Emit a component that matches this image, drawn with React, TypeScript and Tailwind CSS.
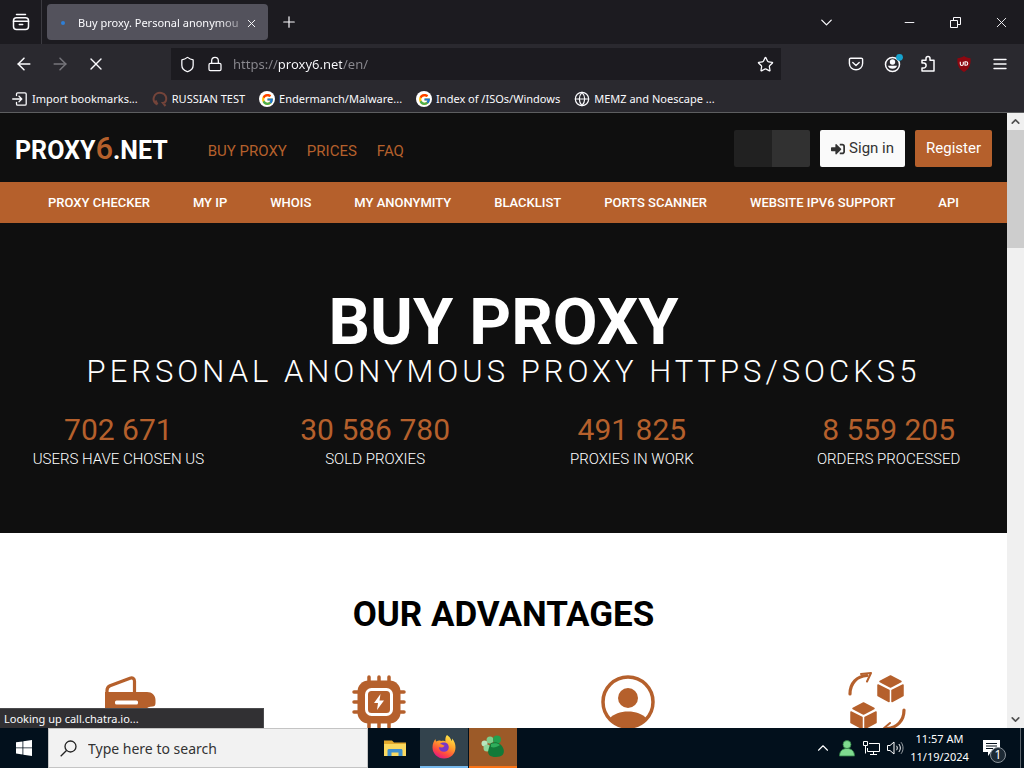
import React from 'react'
import { FcGoogle } from 'react-icons/fc';
import { FaSignInAlt } from 'react-icons/fa';
import { ArrowLeft, ArrowRight, ChevronDown, ChevronUp, Globe, Lock, Minus, Plus, Shield, Star, X } from 'lucide-react';

interface Stat {
    value: string;
    label: string;
}

const tools = ['Proxy checker', 'My IP', 'Whois', 'My anonymity', 'Blacklist', 'Ports scanner', 'Website IPv6 support', 'API'];

const stats: Stat[] = [
    { value: '702 671', label: 'Users have chosen us' },
    { value: '30 586 780', label: 'Sold proxies' },
    { value: '491 825', label: 'Proxies in work' },
    { value: '8 559 205', label: 'Orders processed' },
];

const iconButton = 'flex h-8 w-8 shrink-0 items-center justify-center';

/* ---------- browser icons ---------- */

const FirefoxViewIcon = () => (
    <svg width="18" height="18" viewBox="0 0 18 18" fill="none" stroke="currentColor" strokeWidth="1.5" strokeLinecap="round">
        <path d="M4.500 1.500h9" />
        <rect x="1.500" y="4.800" width="15" height="11.700" rx="3" />
        <path d="M1.500 8.200h15M7.300 11.500h3.400" />
    </svg>
);

const PocketIcon = () => (
    <svg width="16" height="16" viewBox="0 0 16 16" fill="none" stroke="currentColor" strokeWidth="1.4" strokeLinecap="round" strokeLinejoin="round">
        <path d="M2.8 2.2h10.4a1.4 1.4 0 0 1 1.4 1.4v4a6.6 6.1 0 0 1-13.2 0v-4a1.4 1.4 0 0 1 1.4-1.4z" />
        <path d="M4.8 6.5 8 9.400l3.200-2.900" />
    </svg>
);

const AccountIcon = () => (
    <svg width="22" height="22" viewBox="0 0 22 22" fill="none">
        <circle cx="11.500" cy="11.500" r="7" stroke="currentColor" strokeWidth="1.5" />
        <circle cx="11.500" cy="9" r="2.700" fill="currentColor" />
        <path d="M6.900 12.800h9.200a4.800 4.200 0 0 1-9.200 0z" fill="currentColor" />
        <circle cx="18.500" cy="4.300" r="3.400" fill="#16a3cf" />
    </svg>
);

const ExtensionsIcon = () => (
    <svg width="16" height="18" viewBox="0 0 16 18" fill="none" stroke="currentColor" strokeWidth="1.5" strokeLinejoin="round">
        <path d="M2 8V5.2h4V3.4a2 2 0 0 1 4 0v1.8h4V16H2v-3h1.6a2.4 2.4 0 0 0 0-5z" />
    </svg>
);

const AdblockIcon = () => (
    <svg width="16" height="16" viewBox="0 0 16 16" fill="none">
        <path d="M8 0c2 1.400 4.200 2 6.500 2.200C15.300 9 12.500 13.500 8 16 3.500 13.500.7 9 1.500 2.200 3.800 2 6 1.400 8 0z" fill="#8d0710" />
        <path d="M4.300 5.700v2.300a1.500 1.500 0 0 0 3 0V5.700M9 5.800h1a1.700 1.700 0 0 1 0 3.500H9z" stroke="#fff" strokeWidth="1.1" />
    </svg>
);

const MenuIcon = () => (
    <svg width="14" height="12" viewBox="0 0 14 12" stroke="currentColor" strokeWidth="1.400" strokeLinecap="round">
        <path d="M1 1.500h12M1 6h12M1 10.500h12" />
    </svg>
);

const RestoreIcon = () => (
    <svg width="11" height="11" viewBox="0 0 11 11" fill="none" stroke="currentColor">
        <path d="M.5 3.500h7v7h-7zM3.500 3.500v-3h7v7h-3" />
    </svg>
);

const ImportIcon = () => (
    <svg width="16" height="16" viewBox="0 0 16 16" fill="none" stroke="currentColor" strokeWidth="1.300" strokeLinecap="round" strokeLinejoin="round">
        <path d="M4.500 4.500V3a1.200 1.200 0 0 1 1.200-1.200h7.300A1.200 1.200 0 0 1 14.200 3v10a1.200 1.200 0 0 1-1.200 1.200H5.700A1.200 1.200 0 0 1 4.500 13v-1.500M.7 8h8.800M7 5.200 9.800 8 7 10.800" />
    </svg>
);

const HeadIcon = () => (
    <svg width="16" height="16" viewBox="0 0 16 16" fill="none" stroke="#74443a" strokeWidth="2">
        <path d="M5.500 13.500C2.500 12 1 9.500 1.800 6.500 2.800 3 6 1.300 9.500 2c4 .8 5.500 4.500 4.300 8-.6 1.300-1.800 2-2.800 2l2.500 3M5.500 13.500l-2-4" />
    </svg>
);

const GoogleBadge = () => (
    <span className="flex h-4 w-4 items-center justify-center rounded-full bg-white">
        <FcGoogle size={13} />
    </span>
);

/* ---------- advantage icons ---------- */

const WalletIcon = () => (
    <svg width="56" height="56" viewBox="1 0 56 56" fill="none">
        <path d="M6 40V16.500c0-2.500 1-3.800 3-4.700L29 4.200c2.500-1 4.500.3 4.500 3V20" stroke="#b5602c" strokeWidth="3.200" />
        <path d="M4 18h42c5 0 8.500 3.500 8.500 8v3c0 2.500-1 3.500-3 3.500-3.500 0-5.500 1-6.500 3V50H10c-4 0-6-2-6-6z" fill="#b5602c" />
        <rect x="14" y="26.500" width="23" height="4" rx="1.500" fill="#fff" />
    </svg>
);

const ChipIcon = () => (
    <svg width="56" height="56" viewBox="0 0 56 56" fill="none">
        <path d="M18 3v50M28 3v50M38 3v50M3 18h50M3 28h50M3 38h50" stroke="#b5602c" strokeWidth="3.500" strokeLinecap="round" />
        <rect x="6.500" y="6.500" width="43" height="43" rx="11" fill="#b5602c" />
        <rect x="15.500" y="15.500" width="25" height="25" rx="5" stroke="#fff" strokeWidth="3" />
        <path d="M29.500 20 23 29h4l-1 7 7-9.500h-4.500z" fill="#fff" />
    </svg>
);

const PersonIcon = () => (
    <svg width="56" height="56" viewBox="0 0 56 56" fill="none">
        <circle cx="28" cy="28" r="25" stroke="#b5602c" strokeWidth="3.500" />
        <circle cx="28" cy="24" r="10" fill="#b5602c" />
        <path d="M10 44c4-4 10-6.500 18-6.500S42 40 46 44c-4 6-10 9.500-18 9.500S14 50 10 44z" fill="#b5602c" />
    </svg>
);

const Cube = () => (
    <g fill="#b5602c" stroke="#b5602c" strokeWidth="1.500" strokeLinejoin="round">
        <path d="M13.500 1 24 6.500 13.500 12 3 6.500z" />
        <path d="M1 10l11 5.500v11L1 20.500z" />
        <path d="M26 10l-11 5.500v11l11-6z" />
    </g>
);

const CubesIcon = () => (
    <svg width="60" height="60" viewBox="0 0 60 60" fill="none">
        <g transform="translate(30 3)"><Cube /></g>
        <g transform="translate(3 30)"><Cube /></g>
        <path d="M3 22C3 11 10 4 20 3.500" stroke="#b5602c" strokeWidth="3.200" strokeLinecap="round" />
        <path d="M14 2l10-1-4 8.500" stroke="#b5602c" strokeWidth="2" strokeLinejoin="round" strokeLinecap="round" />
        <path d="M57 38c0 11-7 17.500-17 18.500" stroke="#b5602c" strokeWidth="3.200" strokeLinecap="round" />
        <path d="M43 51l-7 6 10 2" stroke="#b5602c" strokeWidth="2" strokeLinejoin="round" strokeLinecap="round" />
    </svg>
);

const advantageIcons = [WalletIcon, ChipIcon, PersonIcon, CubesIcon];

/* ---------- taskbar icons ---------- */

const WindowsIcon = () => (
    <svg width="16" height="16" viewBox="0 0 16 16" fill="#fff">
        <path d="M0 2.300 6.500 1.400v6.100H0zM7.300 1.300 16 0v7.500H7.300zM0 8.300h6.500v6.200L0 13.600zM7.300 8.300H16V16l-8.700-1.300z" />
    </svg>
);

const ExplorerIcon = () => (
    <svg width="22" height="20" viewBox="0 0 22 20">
        <path d="M0 2.500h8l2 2h12V18H0z" fill="#e3a92d" />
        <path d="M0 6h22v12H0z" fill="#fbd95f" />
        <path d="M3.500 18v-5.500c0-1 .8-1.500 1.500-1.500h12c.8 0 1.500.5 1.500 1.500V18h-4v-3.500h-7V18z" fill="#3f8fcf" />
    </svg>
);

const FirefoxIcon = () => (
    <svg width="24" height="24" viewBox="0 0 24 24">
        <defs>
            <linearGradient id="fox" x1="0.8" y1="0" x2="0.3" y2="1">
                <stop offset="0" stopColor="#fff04a" />
                <stop offset="0.45" stopColor="#ff9a2b" />
                <stop offset="0.75" stopColor="#ff4a3f" />
                <stop offset="1" stopColor="#e31587" />
            </linearGradient>
        </defs>
        <path d="M15 0c3.500 2.500 4 4.500 4.500 6 .5-.8.500-1.500.500-2.500C22.500 6 23.500 9 23.500 12.500 23.500 19 18.500 23.500 12 23.500S.5 18.500.5 12.500c0-4 1.500-6.500 3-8.500 0 1 .2 1.500.8 2.500C6 5.500 7.500 5.300 9 6c2-.5 3.500-.5 4.500.5C13 4 13.500 1.500 15 0z" fill="url(#fox)" />
        <path d="M8 9c2-2 6.500-2 8 .5 1.800 3 .3 7-3.500 7.300-3.500.2-5.500-2-5.700-4.500L10 12.500c1.500-.3 2-1 2.500-1.800C11 10.500 10 9 8 9z" fill="#7a35c9" />
    </svg>
);

const BlobIcon = () => (
    <svg width="26" height="24" viewBox="0 0 26 24">
        <circle cx="10" cy="5" r="3.500" fill="#7fce8c" />
        <circle cx="17" cy="4.500" r="4" fill="#23a04e" />
        <circle cx="4.500" cy="8.500" r="3" fill="#b9e6bd" />
        <circle cx="7" cy="13" r="3.500" fill="#8fd69a" />
        <path d="M11 8c5-2 10.500 0 12.500 6 1.500 5-1.500 8-7.500 8S7 19.500 8.500 14.500c.5-2 1-4 2.500-6.500z" fill="#127a38" />
        <path d="M11 9c3-1.500 7-1 9 1-3 2-6 3-9 2z" fill="#2fae5b" />
    </svg>
);

const MessengerIcon = () => (
    <svg width="18" height="18" viewBox="0 0 18 18" fill="#7fdb8f" stroke="#2f7d44" strokeWidth="0.8">
        <path d="M1.500 17c0-5 3-7.500 7.500-7.500s7.500 2.500 7.500 7.500z" />
        <circle cx="9" cy="5.500" r="4" />
    </svg>
);

const NetworkIcon = () => (
    <svg width="17" height="15" viewBox="0 0 17 15" fill="none" stroke="#fff">
        <path d="M6 2.500h10.500v8H4.500V7M10.500 10.500v3M7 13.500h7M.5.500h4v4h-4zM2.500 4.500v8" />
    </svg>
);

const SpeakerIcon = () => (
    <svg width="17" height="14" viewBox="0 0 17 14" fill="none" stroke="#fff">
        <path d="M.5 4.500h2.500l4-3.500v12l-4-3.500H.5zM9.500 4.800c1 1.300 1 3.100 0 4.400M11.800 3c2 2.300 2 5.700 0 8" />
        <path d="M14 1.200c2.700 3.400 2.700 8.200 0 11.600" opacity="0.600" />
    </svg>
);

const ActionCenterIcon = () => (
    <svg width="18" height="18" viewBox="0 0 18 18">
        <path d="M0 1h17v12H8l-3 4v-4H0z" fill="#fff" />
        <path d="M3 4.500h11M3 7h11M3 9.500h7" stroke="#06121d" />
    </svg>
);

const TabStrip = () => (
    <div className="flex h-11 bg-[#1c1b20]">
        <button aria-label="Firefox View" className="flex w-[42px] shrink-0 items-center justify-center border-r border-[#3c3b41]">
            <FirefoxViewIcon />
        </button>
        <div className="my-1 ml-[5px] flex w-[221px] items-center rounded bg-[#53525c] pt-0.5 pr-[9px] pl-[14px]">
            <span className="mr-[13px] h-1 w-1 shrink-0 rounded-full bg-[#2f7fd6]" />
            <span className="flex-1 text-[11px] leading-5 whitespace-nowrap [mask-image:linear-gradient(to_right,#000_85%,#0004)]">
                Buy proxy. Personal anonymou
            </span>
            <button aria-label="Close tab" className="flex w-4 shrink-0 justify-center">
                <X size={13} strokeWidth={1.8} />
            </button>
        </div>
        <button aria-label="New tab" className="ml-[5px] flex w-8 items-center justify-center">
            <Plus size={18} strokeWidth={1.6} />
        </button>
        <div className="flex-1" />
        <button aria-label="List all tabs" className="mr-11 flex w-8 items-center justify-center">
            <ChevronDown size={19} strokeWidth={1.6} />
        </button>
        <button aria-label="Minimize" className="flex w-[46px] items-center justify-center">
            <Minus size={15} strokeWidth={1.5} />
        </button>
        <button aria-label="Restore" className="flex w-[46px] items-center justify-center">
            <RestoreIcon />
        </button>
        <button aria-label="Close" className="flex w-[46px] items-center justify-center">
            <X size={17} strokeWidth={1.3} />
        </button>
    </div>
);

const Toolbar = () => (
    <div className="flex h-10 items-center bg-[#2a292f] px-2">
        <div className="flex gap-1">
            <button aria-label="Back" className={iconButton}><ArrowLeft size={20} strokeWidth={1.8} /></button>
            <button aria-label="Forward" className={`${iconButton} text-[#77767c]`}><ArrowRight size={20} strokeWidth={1.8} /></button>
            <button aria-label="Stop" className={iconButton}><X size={20} strokeWidth={1.6} /></button>
        </div>
        <div className="mx-[59px] flex h-8 flex-1 items-center bg-[#1c1b20] pl-2">
            <Shield size={17} strokeWidth={1.8} className="shrink-0" />
            <Lock size={16} strokeWidth={1.9} className="ml-[11px] shrink-0" />
            <input
                aria-label="Address"
                defaultValue="https://proxy6.net/en/"
                className="ml-[10px] min-w-0 flex-1 bg-[linear-gradient(to_right,#8a898f_45px,#fbfbfe_45px,#fbfbfe_109px,#8a898f_109px)] bg-clip-text pt-0.5 text-[13px] text-transparent outline-none"
            />
            <button aria-label="Bookmark this page" className={iconButton}><Star size={17} strokeWidth={1.8} /></button>
        </div>
        <div className="flex gap-1">
            <button aria-label="Save to Pocket" className={iconButton}><PocketIcon /></button>
            <button aria-label="Account" className={iconButton}><AccountIcon /></button>
            <button aria-label="Extensions" className={iconButton}><ExtensionsIcon /></button>
            <button aria-label="Ad blocker" className={iconButton}><AdblockIcon /></button>
            <button aria-label="Open menu" className={iconButton}><MenuIcon /></button>
        </div>
    </div>
);

const bookmarks = [
    { title: 'Import bookmarks...', icon: <ImportIcon /> },
    { title: 'RUSSIAN TEST', icon: <HeadIcon /> },
    { title: 'Endermanch/Malware...', icon: <GoogleBadge /> },
    { title: 'Index of /ISOs/Windows', icon: <GoogleBadge /> },
    { title: 'MEMZ and Noescape ...', icon: <Globe size={16} strokeWidth={1.8} /> },
];

const Bookmarks = () => (
    <div className="flex h-7 items-center gap-[14px] bg-[#2a292f] pt-0.5 pl-3 text-[11px]">
        {bookmarks.map((bookmark) => (
            <a key={bookmark.title} href="#" className="flex items-center gap-1 whitespace-nowrap">
                {bookmark.icon}
                {bookmark.title}
            </a>
        ))}
    </div>
);

const SiteHeader = () => (
    <header className="flex h-[69px] items-center px-[15px] pt-0.5">
        <a href="#" className="mt-1 flex items-baseline text-[25px] font-bold">
            PROXY<span className="text-[31px] leading-[30px] font-medium text-[#b5602c]">6</span>.NET
        </a>
        <nav className="mt-1.5 ml-10 flex gap-5 text-[15px] text-[#b5602c]">
            <a href="#">BUY PROXY</a>
            <a href="#">PRICES</a>
            <a href="#">FAQ</a>
        </nav>
        <div className="ml-auto flex gap-[10px] text-[15px]">
            <button aria-label="Language" className="flex h-[37px] w-[76px] overflow-hidden rounded-xs">
                <span className="h-full flex-1 bg-[#212121]" />
                <span className="h-full flex-1 bg-[#313131]" />
            </button>
            <button className="flex h-[37px] items-center gap-1 rounded-xs bg-[#fafafa] px-[11px] text-[#333]">
                <FaSignInAlt size={14} />
                Sign in
            </button>
            <button className="h-[37px] rounded-xs bg-[#b5602c] px-[11px] text-white">Register</button>
        </div>
    </header>
);

const Site = () => (
    <main className="min-w-0 flex-1 overflow-hidden bg-[#0f0f0f] font-['Roboto',sans-serif] text-white">
        <SiteHeader />
        <nav className="flex h-[41px] items-center justify-between bg-[#b5602c] px-12 text-[13px] font-medium uppercase">
            {tools.map((tool) => <a key={tool} href="#">{tool}</a>)}
        </nav>
        <section className="h-[310px] overflow-hidden pt-[67px] text-center">
            <h1 className="text-[65px] leading-[64px] font-bold">BUY PROXY</h1>
            <h2 className="text-[31px] leading-9 font-light tracking-[4px] whitespace-nowrap">PERSONAL ANONYMOUS PROXY HTTPS/SOCKS5</h2>
            <div className="-mx-[10px] mt-[22px] grid grid-cols-4">
                {stats.map((stat) => (
                    <div key={stat.label}>
                        <p className="text-[30px] leading-9 text-[#b5602c]">{stat.value}</p>
                        <p className="text-[15px] leading-[22px] font-light uppercase">{stat.label}</p>
                    </div>
                ))}
            </div>
        </section>
        <section className="bg-white pt-[61px] pb-20 text-center text-black">
            <h2 className="text-[35px] leading-[42px] font-bold">OUR ADVANTAGES</h2>
            <div className="mt-9 grid grid-cols-4 items-center justify-items-center px-[5px]">
                {advantageIcons.map((Icon, index) => <Icon key={index} />)}
            </div>
        </section>
    </main>
);

const Scrollbar = () => (
    <div className="flex w-[17px] shrink-0 flex-col bg-[#f0f0f0] text-[#505050]">
        <button aria-label="Scroll up" className="flex h-[17px] items-center justify-center"><ChevronUp size={13} strokeWidth={3} /></button>
        <div className="h-[118px] bg-[#cdcdcd]" />
        <div className="flex-1" />
        <button aria-label="Scroll down" className="flex h-[17px] items-center justify-center"><ChevronDown size={13} strokeWidth={3} /></button>
    </div>
);

const Taskbar = () => (
    <footer className="flex h-10 shrink-0 bg-[#02101c] text-white">
        <button aria-label="Start" className="flex w-12 items-center justify-center"><WindowsIcon /></button>
        <label className="flex w-80 items-center border border-[#c4c4c4] bg-[#f2f2f2] pl-[11px] text-[#222]">
            <svg width="17" height="17" viewBox="0 0 17 17" fill="none" stroke="currentColor" strokeWidth="1.3">
                <circle cx="10.5" cy="6.5" r="5.5" />
                <path d="M6.5 10.5.7 16.3" />
            </svg>
            <input aria-label="Search" placeholder="Type here to search" className="ml-[11px] min-w-0 flex-1 bg-transparent text-[14px] outline-none placeholder:text-[#333]" />
        </label>
        <button aria-label="File Explorer" className="ml-0.5 flex w-[50px] items-center justify-center"><ExplorerIcon /></button>
        <button aria-label="Firefox" className="flex w-12 items-center justify-center border-b-2 border-[#76b9ed] bg-[#33434d]"><FirefoxIcon /></button>
        <button aria-label="Messenger" className="ml-px flex w-12 items-center justify-center border-b-2 border-[#f97316] bg-[#9c5a28]"><BlobIcon /></button>
        <div className="ml-auto flex items-center">
            <button aria-label="Show hidden icons" className="flex w-6 justify-center"><ChevronUp size={18} strokeWidth={1.5} /></button>
            <button aria-label="Contacts" className="flex w-6 justify-center"><MessengerIcon /></button>
            <button aria-label="Network" className="flex w-6 justify-center"><NetworkIcon /></button>
            <button aria-label="Volume" className="flex w-6 justify-center"><SpeakerIcon /></button>
            <button className="w-[65px] text-center text-[11px] leading-[18px]">
                <span className="block">11:57 AM</span>
                <span className="block">11/19/2024</span>
            </button>
            <button aria-label="Notifications" className="relative flex h-10 w-12 items-center pl-[11px]">
                <ActionCenterIcon />
                <span className="absolute top-[19px] left-[18px] flex h-4 w-4 items-center justify-center rounded-full border border-[#8a9299] bg-[#1d2a35] text-[12px]">1</span>
            </button>
            <div className="h-10 w-1 border-l border-[#5b646c]" />
        </div>
    </footer>
);

export default function App() {
    return (
        <div className="flex h-screen flex-col overflow-hidden bg-[#0f0f0f] font-['Noto_Sans',sans-serif] text-[#fbfbfe]">
            <TabStrip />
            <Toolbar />
            <Bookmarks />
            <div className="relative flex min-h-0 flex-1 border-t border-[#5d5e60]">
                <Site />
                <Scrollbar />
                <div className="absolute bottom-0 left-0 h-5 w-[264px] border-t border-r border-[#4a4a4d] bg-[#313033] pl-1 text-[11px] leading-5">
                    Looking up call.chatra.io...
                </div>
            </div>
            <Taskbar />
        </div>
    )
}
